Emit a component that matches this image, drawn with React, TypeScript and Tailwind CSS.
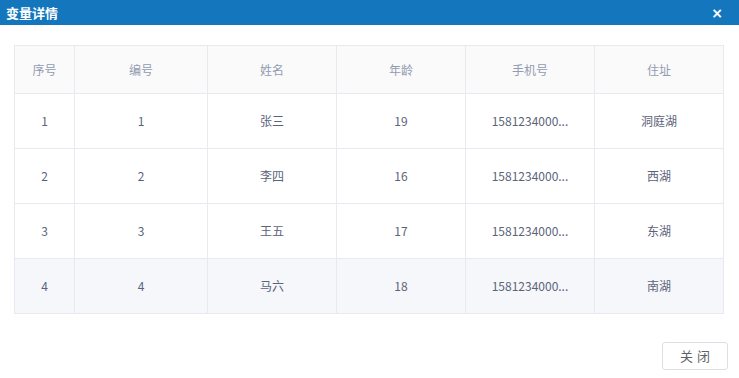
const rows = [
  { idx: 1, no: 1, name: '张三', age: 19, phone: '1581234000...', addr: '洞庭湖' },
  { idx: 2, no: 2, name: '李四', age: 16, phone: '1581234000...', addr: '西湖' },
  { idx: 3, no: 3, name: '王五', age: 17, phone: '1581234000...', addr: '东湖' },
  { idx: 4, no: 4, name: '马六', age: 18, phone: '1581234000...', addr: '南湖' },
]

const COLS = ['序号', '编号', '姓名', '年龄', '手机号', '住址']
const WIDTHS = ['w-[60px]', 'w-[133px]', 'w-[129px]', 'w-[129px]', 'w-[129px]', 'flex-1']

export default function App() {
  return (
    <div className="w-[739px] h-[378px] bg-white flex flex-col" style={{ fontFamily: '"Noto Sans CJK SC", "Liberation Sans", sans-serif' }}>
      {/* title bar */}
      <div className="h-[25px] bg-[#1477bd] flex items-center justify-between pl-[6px] pr-[16px]">
        <span className="text-white text-[13px] font-bold leading-none">变量详情</span>
        <span className="text-white text-[14px] font-bold leading-none" style={{ fontFamily: '"DejaVu Sans", sans-serif' }}>×</span>
      </div>

      {/* table */}
      <div className="mt-[20px] ml-[14px] w-[710px] border border-[#e8eaf1] text-[12px]">
        <div className="flex h-[47px] bg-[#fafafa] text-[#939bb2]">
          {COLS.map((c, i) => (
            <div key={c} className={`${WIDTHS[i]} flex items-center justify-center ${i < 5 ? 'border-r border-[#e8eaf1]' : ''}`}>{c}</div>
          ))}
        </div>
        {rows.map((r, ri) => {
          const cells = [r.idx, r.no, r.name, r.age, r.phone, r.addr]
          return (
            <div key={r.idx} className={`flex h-[55px] border-t border-[#e8eaf1] text-[#5b6379] ${ri === 3 ? 'bg-[#f5f7fa]' : 'bg-white'}`}>
              {cells.map((c, i) => (
                <div key={i} className={`${WIDTHS[i]} flex items-center justify-center ${i < 5 ? 'border-r border-[#e8eaf1]' : ''}`}>{c}</div>
              ))}
            </div>
          )
        })}
      </div>

      <div className="flex justify-end pr-[11px] mt-[28px]">
        <button className="w-[66px] h-[28px] border border-[#dcdfe6] rounded-[3px] bg-white text-[13px] text-[#606266] tracking-[4px] pl-[4px]">关闭</button>
      </div>
    </div>
  )
}
